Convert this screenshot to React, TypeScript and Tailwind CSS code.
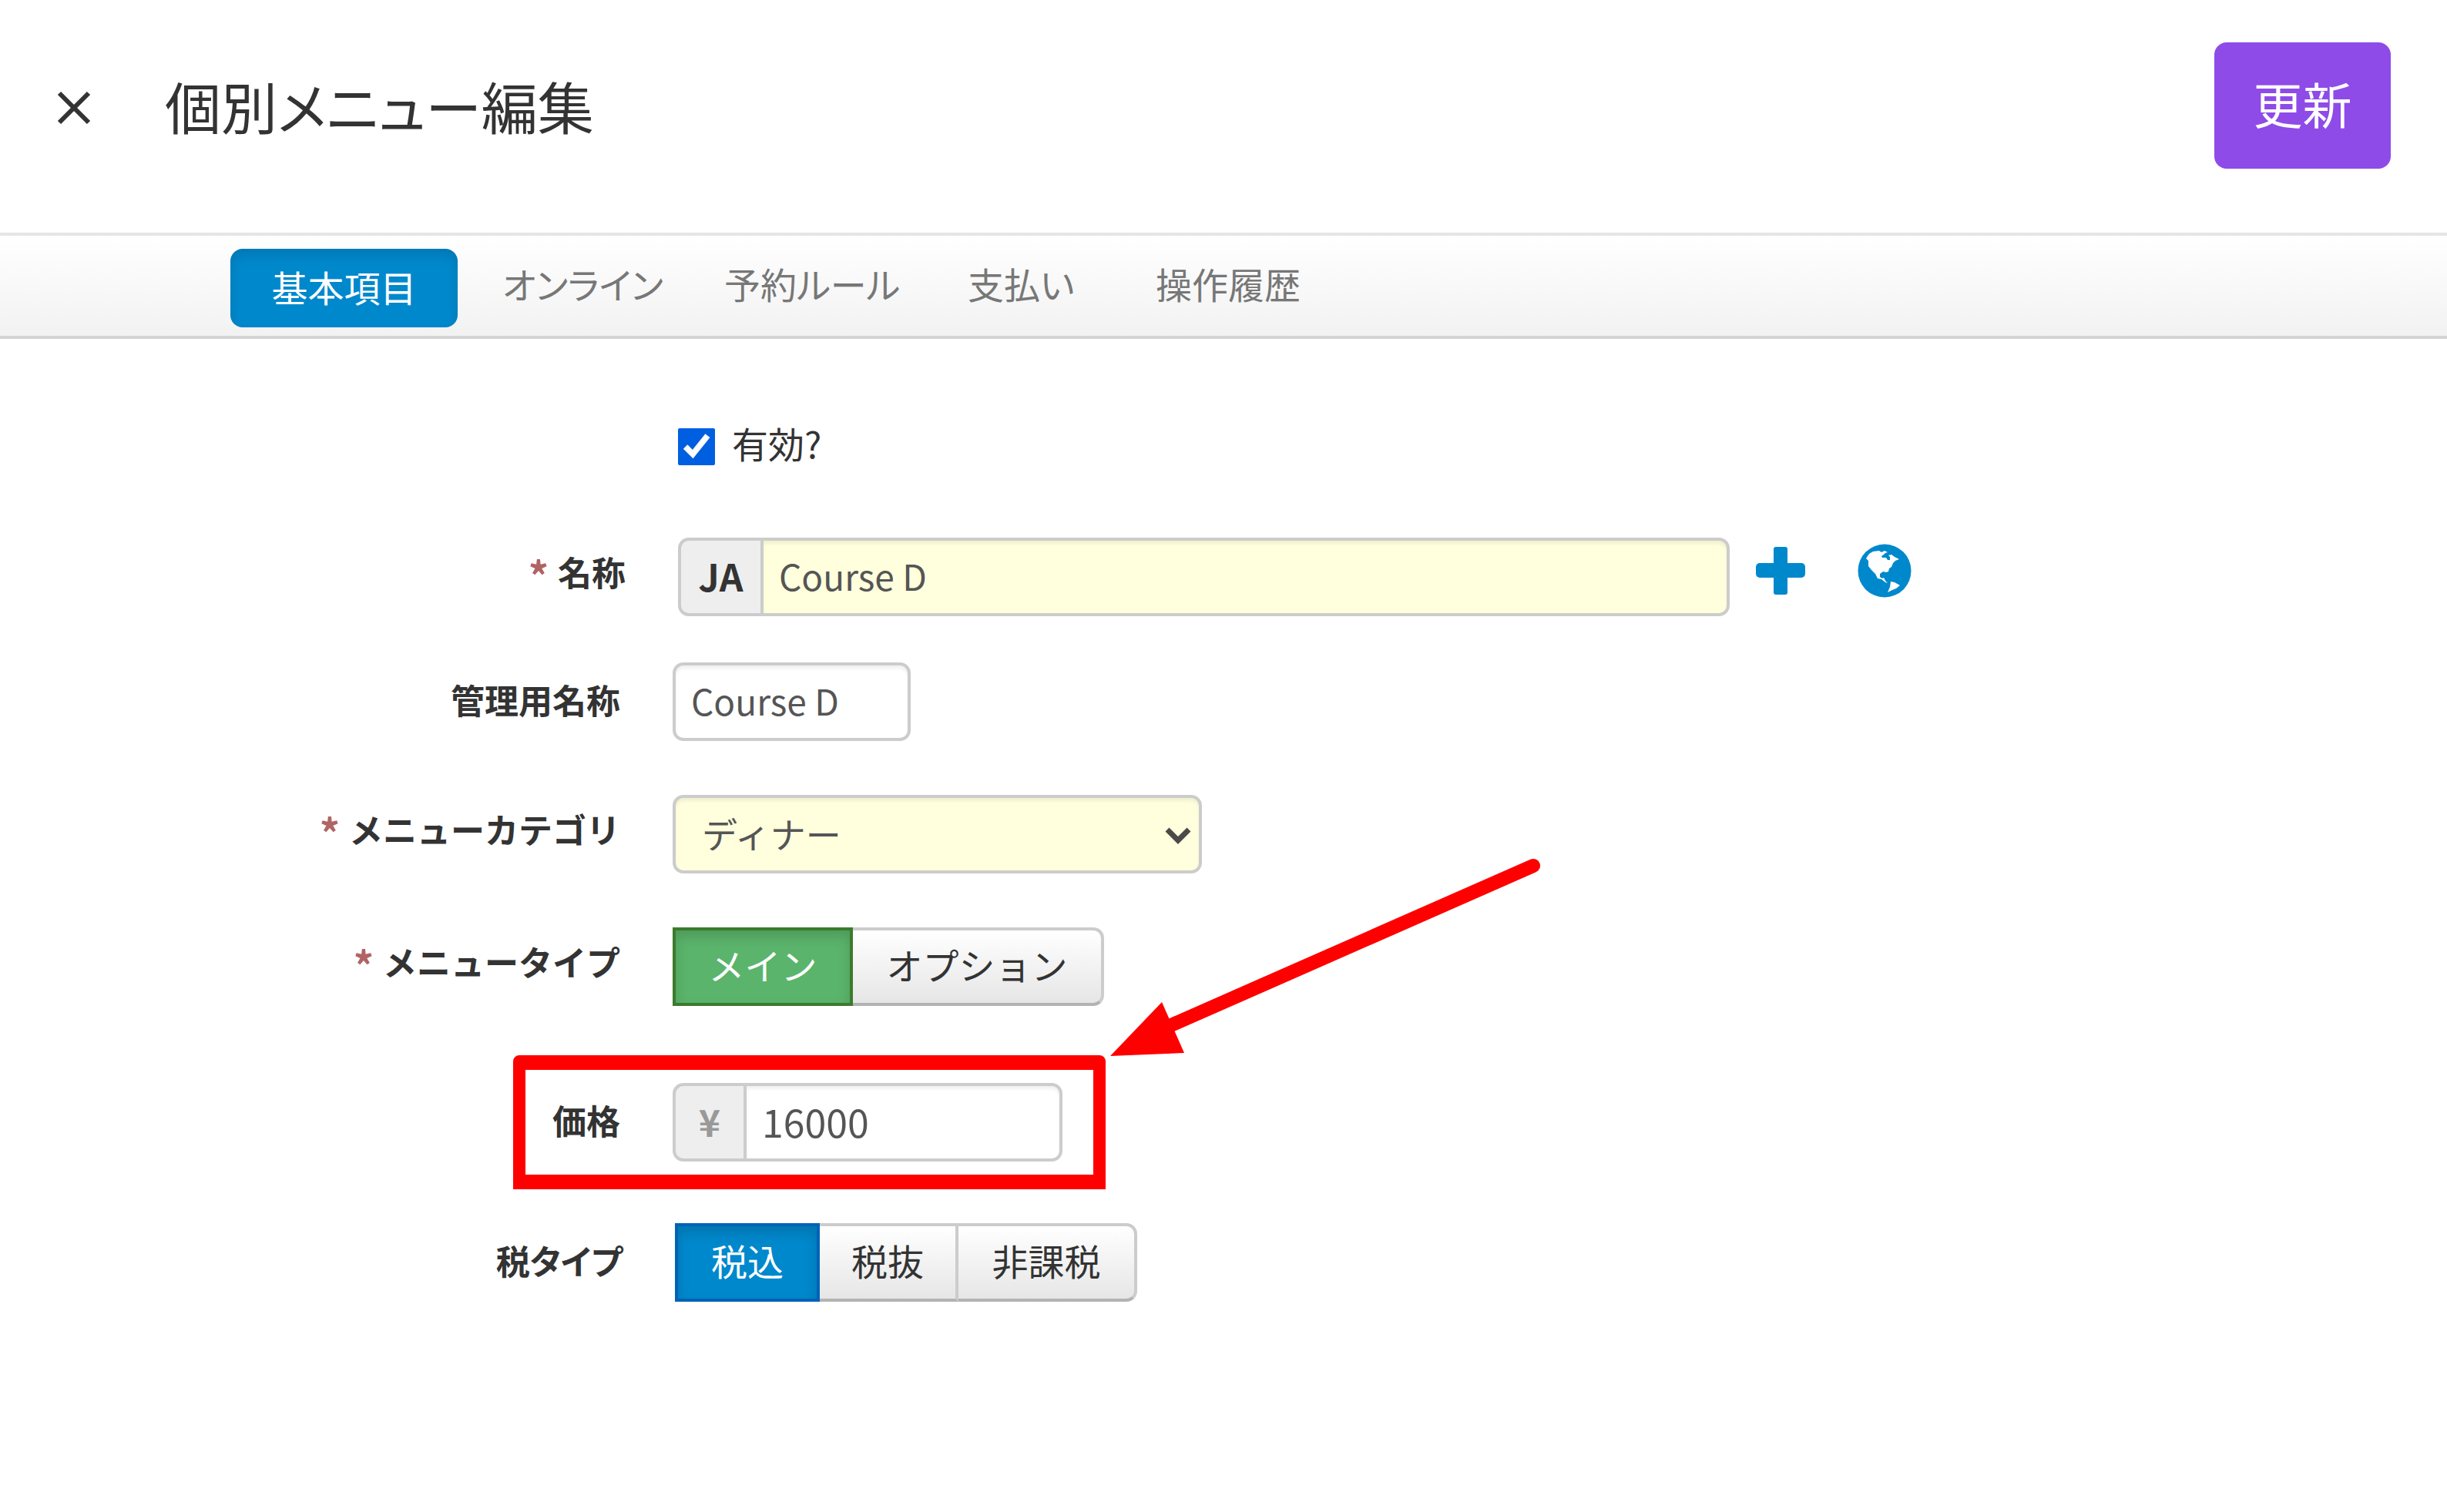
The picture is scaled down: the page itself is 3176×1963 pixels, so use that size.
import type { ReactNode } from "react";
import { useState } from "react";

const tabs = [
  { label: "オンライン", width: "w-[288px]" },
  { label: "予約ルール", width: "w-[316px]" },
  { label: "支払い", width: "w-[244px]" },
  { label: "操作履歴", width: "w-[290px]" },
];

const fieldBox =
  "h-[102px] border-[4px] border-[#cccccc] pb-[4px] text-[46px] leading-none text-[#555555] shadow-[inset_0_4px_4px_rgba(0,0,0,0.06)] outline-none";
const segment =
  "flex h-[102px] cursor-pointer items-center justify-center border-[4px] border-[#cccccc] border-b-[#b3b3b3] bg-linear-to-b from-white to-[#e6e6e6] pb-[8px] text-[47px] leading-none text-[#333333]";

function CloseIcon() {
  return (
    <svg className="size-[44px]" viewBox="0 0 44 44" fill="none" stroke="#333" strokeWidth="6" aria-hidden="true">
      <path d="M3 3 41 41M41 3 3 41" />
    </svg>
  );
}

function PlusIcon() {
  return (
    <svg className="size-[64px]" viewBox="0 0 64 64" fill="#0088cc" aria-hidden="true">
      <rect x="23" y="1" width="18" height="62" rx="3" />
      <rect x="0" y="22" width="64" height="19" rx="5" />
    </svg>
  );
}

function GlobeIcon() {
  return (
    <svg className="size-[70px]" viewBox="0 0 70 70" aria-hidden="true">
      <circle cx="35" cy="35" r="34.5" fill="#0088cc" />
      <path
        fill="#fff"
        d="M11 19 15 13 20 10 28 9 31 11 35 9 39 11 36 12 34 14 31 16 32 18 37 18 39 21 42 21 42 17 40 15 44 14 48 17 54 20 49 22 46 25 44 30 41 32 40 36 37 37 33 36 29 39 29 43 32 45 34 44 36 48 39 51 36 50 31 46 26 45 23 39 18 34 14 29 14 22Z"
      />
      <path fill="#fff" d="M43 49 48 50 55 54 50 58 45 60 39 63 42 56Z" />
    </svg>
  );
}

function FormRow({
  label,
  htmlFor,
  required,
  labelStyle = "w-[805px]",
  children,
}: {
  label: string;
  htmlFor?: string;
  required?: boolean;
  labelStyle?: string;
  children: ReactNode;
}) {
  return (
    <div className="flex items-center gap-[68px]">
      <label
        htmlFor={htmlFor}
        className={`flex ${labelStyle} shrink-0 justify-end gap-3 pb-[6px] text-[44px] leading-none font-bold text-[#333333]`}
      >
        {required && <span className="text-[52px] text-[#b06464]">*</span>}
        {label}
      </label>
      {children}
    </div>
  );
}

export default function App() {
  const [active, setActive] = useState(true);
  return (
    <div className="min-h-screen bg-white pb-10 font-['Noto_Sans_CJK_JP',sans-serif] text-[#333333]">
      <header className="flex h-[302px] items-start justify-between pt-[55px] pr-[73px] pl-[74px]">
        <div className="flex h-[170px] items-center gap-[96px]">
          <button type="button" aria-label="閉じる" className="cursor-pointer">
            <CloseIcon />
          </button>
          <h1 className="pb-[8px] text-[73px] leading-none font-normal [font-feature-settings:'palt']">個別メニュー編集</h1>
        </div>
        <button
          type="button"
          className="h-[164px] w-[229px] cursor-pointer rounded-[16px] bg-[#8e4be8] pb-[8px] text-[64px] leading-none text-white"
        >
          更新
        </button>
      </header>

      <nav className="flex h-[138px] items-center border-t-[4px] border-b-[4px] border-t-[#e5e5e5] border-b-[#d4d4d4] bg-linear-to-b from-white to-[#f2f2f2] pl-[299px] text-[47px] leading-none text-[#777777]">
        <a
          href="#basic"
          className="mt-[6px] mr-[58px] flex h-[102px] w-[295px] items-center justify-center rounded-[16px] bg-[#0088cc] pb-[6px] text-white shadow-[inset_0_8px_16px_rgba(0,0,0,0.12)]"
        >
          基本項目
        </a>
        {tabs.map((t) => (
          <a key={t.label} href={`#${t.label}`} className={`${t.width} pb-[8px] [font-feature-settings:'palt']`}>
            {t.label}
          </a>
        ))}
      </nav>

      <main className="pt-[108px]">
        <div className="flex h-[64px] items-center gap-[22px] pl-[880px]">
          <input
            id="active"
            type="checkbox"
            checked={active}
            onChange={(e) => setActive(e.target.checked)}
            className="size-[48px] accent-[#005fe0]"
          />
          <label htmlFor="active" className="pb-[12px] text-[47px] leading-none">
            有効?
          </label>
        </div>

        <div className="mt-[86px]">
          <FormRow label="名称" htmlFor="name" required labelStyle="w-[812px]">
            <div className="flex items-center">
              <span className="flex h-[102px] w-[107px] items-center justify-center rounded-l-[14px] border-[4px] border-r-0 border-[#cccccc] bg-[#eeeeee] pb-[4px] text-[48px] leading-none font-bold">
                JA
              </span>
              <input id="name" defaultValue="Course D" className={`${fieldBox} w-[1258px] rounded-r-[14px] bg-[#ffffdd] px-[20px]`} />
              <div className="flex gap-[68px] pb-[16px] pl-[34px]">
                <button type="button" aria-label="追加" className="cursor-pointer">
                  <PlusIcon />
                </button>
                <button type="button" aria-label="翻訳" className="cursor-pointer">
                  <GlobeIcon />
                </button>
              </div>
            </div>
          </FormRow>
        </div>

        <div className="mt-[60px]">
          <FormRow label="管理用名称" htmlFor="admin-name">
            <input id="admin-name" defaultValue="Course D" className={`${fieldBox} w-[309px] rounded-[14px] bg-white px-[20px]`} />
          </FormRow>
        </div>

        <div className="mt-[70px]">
          <FormRow label="メニューカテゴリ" htmlFor="category" required>
            <div className="relative">
              <select id="category" className={`${fieldBox} w-[687px] appearance-none rounded-[14px] bg-[#ffffdd] px-[34px]`}>
                <option>ディナー</option>
              </select>
              <svg
                className="pointer-events-none absolute top-[42px] right-[14px] h-[22px] w-[34px]"
                viewBox="0 0 34 22"
                fill="none"
                stroke="#4a4a4a"
                strokeWidth="7"
                aria-hidden="true"
              >
                <path d="M3 3 17 17 31 3" />
              </svg>
            </div>
          </FormRow>
        </div>

        <div className="mt-[70px]">
          <FormRow label="メニュータイプ" required>
            <div className="flex">
              <button
                type="button"
                className="h-[102px] w-[234px] cursor-pointer border-[4px] border-[#3c7a2d] bg-[#5bb46b] pb-[8px] text-[47px] leading-none text-white shadow-[inset_0_8px_16px_rgba(0,0,0,0.15)]"
              >
                メイン
              </button>
              <button type="button" className={`${segment} w-[326px] rounded-r-[14px] border-l-0`}>
                オプション
              </button>
            </div>
          </FormRow>
        </div>

        <div className="relative mt-[100px]">
          <FormRow label="価格" htmlFor="price">
            <div className="flex">
              <span className="flex h-[102px] w-[92px] items-center justify-center rounded-l-[14px] border-[4px] border-r-0 border-[#cccccc] bg-[#eeeeee] pb-[4px] text-[48px] leading-none font-bold text-[#999999]">
                ¥
              </span>
              <input
                id="price"
                defaultValue="16000"
                className="h-[102px] w-[414px] rounded-r-[14px] border-[4px] border-[#cccccc] bg-white px-[20px] pb-[4px] text-[50px] leading-none text-[#555555] shadow-[inset_0_4px_4px_rgba(0,0,0,0.06)] outline-none"
              />
            </div>
          </FormRow>
          <div className="pointer-events-none absolute -top-[36px] left-[666px] h-[174px] w-[769px] rounded-t-[8px] border-x-[16px] border-y-[19px] border-[#ff0000]" />
          <svg className="pointer-events-none absolute -top-[292px] left-[1440px] h-[258px] w-[562px]" viewBox="0 0 562 258" aria-hidden="true">
            <path d="M550 10 80 217" stroke="#f00" strokeWidth="18" strokeLinecap="round" fill="none" />
            <path d="M1 257 68 187 79 212 86 228 97 253Z" fill="#f00" />
          </svg>
        </div>

        <div className="mt-[80px]">
          <FormRow label="税タイプ" labelStyle="w-[808px] [font-feature-settings:'palt']">
            <div className="flex">
              <button
                type="button"
                className="h-[102px] w-[188px] cursor-pointer border-[4px] border-[#0062b8] bg-[#0088cc] pb-[8px] text-[47px] leading-none text-white shadow-[inset_0_8px_16px_rgba(0,0,0,0.15)]"
              >
                税込
              </button>
              <button type="button" className={`${segment} w-[180px] border-l-0`}>
                税抜
              </button>
              <button type="button" className={`${segment} w-[232px] rounded-r-[14px] border-l-0`}>
                非課税
              </button>
            </div>
          </FormRow>
        </div>
      </main>
    </div>
  );
}
